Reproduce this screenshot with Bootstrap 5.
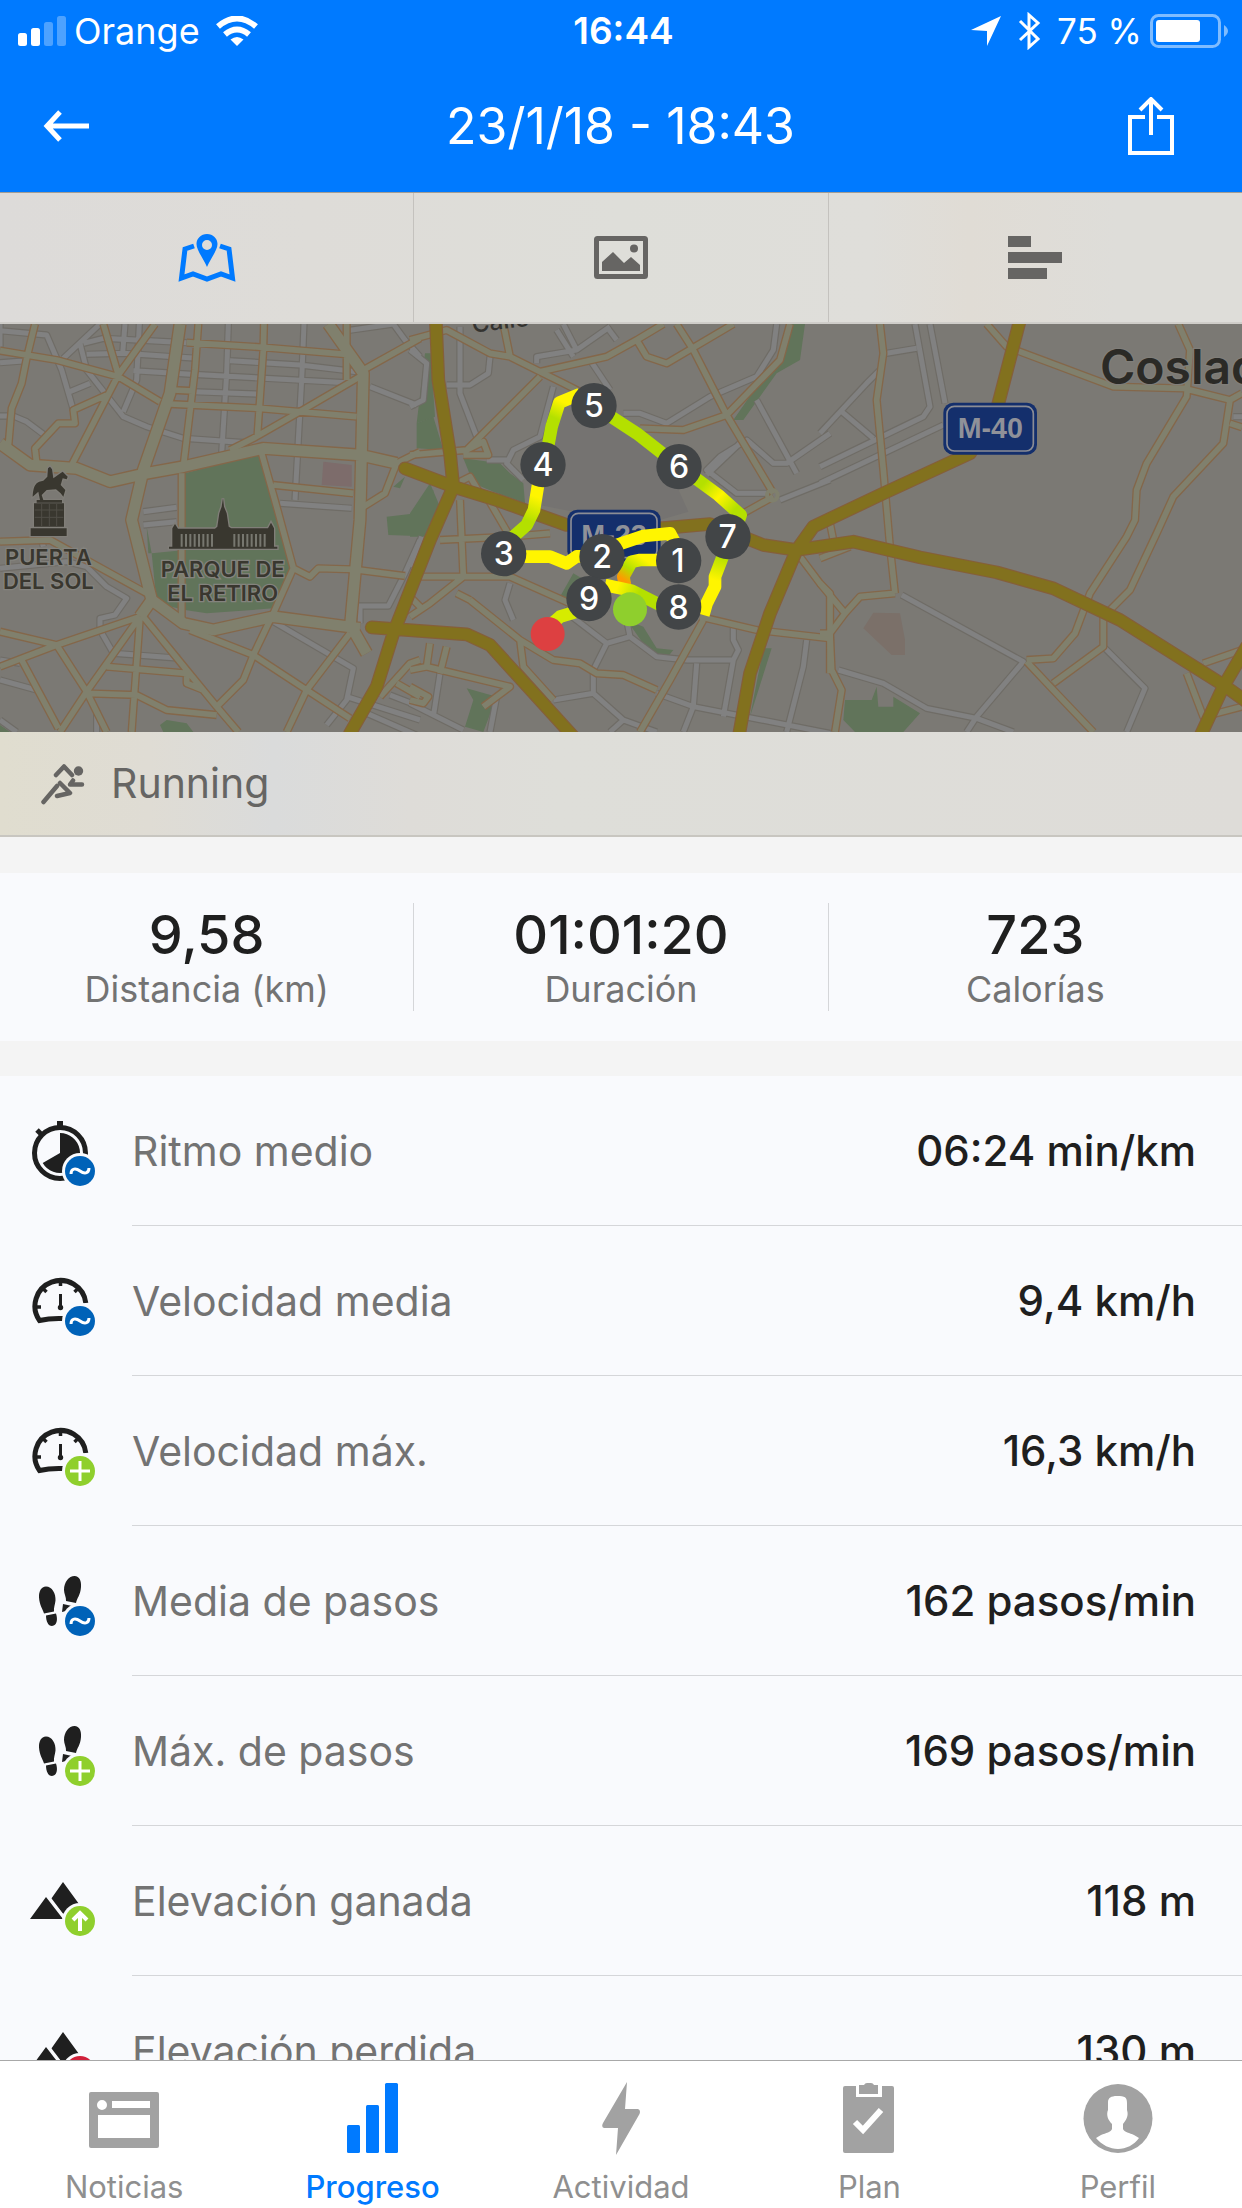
<!DOCTYPE html>
<html lang="es">
<head>
<meta charset="utf-8">
<meta name="viewport" content="width=device-width, initial-scale=1">
<title>23/1/18 - 18:43</title>
<link href="https://cdn.jsdelivr.net/npm/bootstrap@5.3.0/dist/css/bootstrap.min.css" rel="stylesheet">
<style>
body{font-family:Inter,"Liberation Sans",sans-serif;background:#f4f4f4;color:#1f1f1f}
svg{display:block}
a{color:inherit;text-decoration:none}
.topbar{background:#007aff;color:#fff}
.status-row{height:62px;font-size:36px;line-height:44px;padding:0 13px 0 18px}
.clock{font-size:37px}
.battery-level{font-size:35px}
.side{flex:1 1 0}
.title-row{height:130px;padding:0 68px 2px 43px}
.title-row h1{font-size:50px;line-height:60px;font-weight:400}
.icon-btn{height:64px;border:0;background:none;color:#fff;padding:0}
.view-tabs{height:132px;border-top:1px solid #a29d95;border-bottom:2px solid #cfcdc9;background:linear-gradient(90deg,#dddbd9,#dedcd8 25%,#deded9 50%,#dfdeda 70%,#e0dcd5 78%,#deddd9 90%)}
.view-tabs a{color:#666563}
.view-tabs a:not(:last-child){border-right:1px solid #c4c2be}
.view-tabs a.active{color:#007aff}
.route-map{width:100%;height:408px;background:#7b7974}
.sport{height:105px;border-bottom:2px solid #c8c6c0;background:linear-gradient(90deg,#e0ddcf,#dfdcd4 12%,#dadbdb 22%,#dedcd8 33%,#deded9 45%,#dedcd8);color:#666563;font-size:41px;padding-left:40px;gap:25px}
.totals{background:#f9fafd;margin:36px 0 35px;padding:30px 0;height:168px}
.totals .cell:not(:last-child){border-right:1px solid #d5d6d9}
.total-value{font-size:54px;line-height:64px;font-weight:500}
.total-label{font-size:36px;line-height:44px;color:#737373}
.metrics{background:#f9fafd}
.metric{height:150px;padding-left:30px;gap:36px}
.metric-body{border-bottom:1px solid #d5d6d9;padding-right:46px;font-size:41px;line-height:48px}
.metric-name{color:#737373}
.metric-value{font-weight:500;font-size:42px}
.bottom-tabs{height:148px;background:#fff;border-top:1px solid #a8a8a8;color:#8f8f8f;font-size:31px;line-height:36px}
.bottom-tabs a{padding-top:20px;gap:12px}
.bottom-tabs svg{fill:#a2a2a2}
.bottom-tabs a.active{color:#007aff;font-weight:500}
.bottom-tabs a.active svg{fill:#007aff}
.road-net{fill:none;stroke-linejoin:round}
</style>
</head>
<body>
<svg width="0" height="0" class="position-absolute" aria-hidden="true">
<defs>
<symbol id="badge-avg" viewBox="0 0 66 70"><circle cx="50" cy="55" r="18" fill="#f9fafd"/><circle cx="50" cy="55" r="15" fill="#0062b8"/><path d="M41 58c0-6 5-6 9-3s9 3 9-3" fill="none" stroke="#fff" stroke-width="3"/></symbol>
<symbol id="badge-plus" viewBox="0 0 66 70"><circle cx="50" cy="55" r="18" fill="#f9fafd"/><circle cx="50" cy="55" r="15" fill="#8fcf2d"/><path d="M40 55h20M50 45v20" fill="none" stroke="#fff" stroke-width="3"/></symbol>
<symbol id="badge-up" viewBox="0 0 66 70"><circle cx="50" cy="55" r="18" fill="#f9fafd"/><circle cx="50" cy="55" r="15" fill="#8fcf2d"/><path d="M50 65V47M43 54l7-7 7 7" fill="none" stroke="#fff" stroke-width="4"/></symbol>
<symbol id="badge-down" viewBox="0 0 66 70"><circle cx="50" cy="55" r="18" fill="#f9fafd"/><circle cx="50" cy="55" r="15" fill="#d0203a"/><path d="M50 45v18M43 56l7 7 7-7" fill="none" stroke="#fff" stroke-width="4"/></symbol>
<symbol id="gauge" viewBox="0 0 66 70"><path d="M33 52.500Q20 52 9.500 54.500A25.500 25.500 0 1 1 55.800 37" fill="none" stroke="#1f1f1f" stroke-width="5"/><path d="M30.500 14v6M6 41h5M13.500 23l3 3M47.500 23l-3 3" stroke="#1f1f1f" stroke-width="3.500"/><path d="M30.500 28v14" stroke="#1f1f1f" stroke-width="3"/><circle cx="30.500" cy="41.500" r="2.700"/></symbol>
<symbol id="steps" viewBox="0 0 66 70"><path d="M16 20.500c6 0 10 7 9.500 14-.3 4-2 7-1.500 11l-10 2c-1-4-4.500-8-5-16-.2-6 2-11 7-11zM16 49.500l10-2c2 6 1 12-4 12.500-4 0-6-5-6-10.500zM44.500 10c5 0 7 5 6.500 11-.5 8-4 11-5 16l-10-2c.4-4-2-7-2-11 0-8 5-14 10.500-14zM33 38l9 2-2 4-8 2z"/></symbol>
<symbol id="peaks" viewBox="0 0 66 70"><path d="M33 16l16 22-16 10L21 33zM16 31l17 22H0z"/></symbol>
</defs>
</svg>

<div class="d-flex flex-column vh-100 overflow-hidden">
<header class="topbar flex-shrink-0">
  <div class="status-row d-flex align-items-center">
    <div class="side d-flex align-items-center">
      <svg width="48" height="30" viewBox="0 0 48 30" fill="#fff"><rect y="17" width="9" height="13" rx="2.500"/><rect x="13" y="12" width="9" height="18" rx="2.500"/><g opacity=".3"><rect x="26" y="6" width="9" height="24" rx="2.500"/><rect x="39" width="9" height="30" rx="2.500"/></g></svg>
      <span class="px-2">Orange</span>
      <svg class="ms-2" width="42" height="30" viewBox="0 0 42 30" fill="none" stroke="#fff"><path d="M2 10.500Q21-5.500 40 10.500" stroke-width="6"/><path d="M9 18.500q12-10 24 0" stroke-width="6"/><path d="M14.500 23.500q6.500-5 13 0L21 30z" fill="#fff" stroke="none"/></svg>
    </div>
    <span class="clock fw-semibold">16:44</span>
    <div class="side d-flex align-items-center justify-content-end">
      <svg width="30" height="30" viewBox="0 0 30 30" fill="#fff"><path d="M30 0L16 30V15L0 14z"/></svg>
      <svg class="mx-3" width="24" height="38" viewBox="0 0 24 38" fill="none" stroke="#fff" stroke-width="3"><path d="M3 9l18 18-9 8V3l9 8L3 28"/></svg>
      <span class="battery-level me-2">75 %</span>
      <svg width="79" height="34" viewBox="0 0 79 34"><rect x="1.500" y="1.500" width="68" height="31" rx="7" fill="none" stroke="#7fbcff" stroke-width="3"/><rect x="6" y="6" width="44" height="22" rx="3" fill="#fff"/><path d="M74 11q8 6 0 12z" fill="#7fbcff"/></svg>
    </div>
  </div>
  <div class="title-row d-flex align-items-center">
    <div class="side d-flex"><button class="icon-btn" type="button" aria-label="Atrás"><svg width="46" height="32" viewBox="0 0 46 32" fill="none" stroke="#fff" stroke-width="5"><path d="M46 16H4M17 2L4 16l13 14"/></svg></button></div>
    <h1 class="m-0 ps-4">23/1/18 - 18:43</h1>
    <div class="side d-flex justify-content-end"><button class="icon-btn" type="button" aria-label="Compartir"><svg width="46" height="58" viewBox="0 0 46 58" fill="none" stroke="#fff" stroke-width="4"><path d="M17 20H2v36h42V20H29M23 38V3M12 13L23 2l11 11"/></svg></button></div>
  </div>
</header>

<main class="flex-grow-1 overflow-hidden">
  <nav class="view-tabs row g-0" aria-label="Vistas">
    <a class="col d-flex align-items-center justify-content-center active" href="#mapa" aria-label="Mapa"><svg width="58" height="48" viewBox="0 0 58 48" fill="currentColor"><path fill-rule="evenodd" d="M29 0c6 0 10.500 4.500 10.500 10 0 6-6.500 14-10.500 23-4-9-10.500-17-10.500-23C18.500 4.500 23 0 29 0zm0 6a5 5 0 1 0 0 10 5 5 0 0 0 0-10z"/><path d="M16 12L7 15 3.500 44 15 40l14 5 14-5 11.500 4L51 15l-9-3" fill="none" stroke="currentColor" stroke-width="5"/></svg></a>
    <a class="col d-flex align-items-center justify-content-center" href="#fotos" aria-label="Fotos"><svg width="54" height="43" viewBox="0 0 54 43" fill="currentColor"><rect x="2.500" y="2.500" width="49" height="38" rx="1" fill="none" stroke="currentColor" stroke-width="5"/><path d="M8 35V26l11-10 11 11 7-6 9 8v6z"/><circle cx="40" cy="12.500" r="4"/></svg></a>
    <a class="col d-flex align-items-center justify-content-center" href="#datos" aria-label="Datos"><svg width="54" height="43" viewBox="0 0 54 43" fill="currentColor"><path d="M0 0h23v11H0zM0 16h54v11H0zM0 32h39v11H0z"/></svg></a>
  </nav>

  <svg class="route-map" viewBox="0 12 3726 1224" preserveAspectRatio="xMidYMid slice" role="img" aria-label="Mapa del recorrido">
    <defs>
      <g id="minor">
        <path d="M0 32L140 45 185 150 220 270M0 128L80 122M300 12L190 115M240 70L260 150 370 290 440 320 550 355 740 368M250 70L310 55 560 68M260 103L370 100 590 115M375 12L368 100M418 12L410 180 370 275M400 152L560 162 1040 188M210 215L270 190M685 12L680 160 665 400M912 12L905 180 885 540M690 122L900 135 1070 155M580 215L770 222M840 550L1055 565M1110 200L1250 255M0 288H40L80 305 140 350M1040 32L1180 12 1215 60 1260 110M430 575L530 562M430 615L530 605M0 745L200 725 260 740 320 800 380 835 345 885 300 895V930L340 1000 540 1015M0 1020L60 1030M0 1080L110 1110M820 905L1060 1045 1040 1140 980 1215M1065 858H1165L1215 760 1260 660M1080 860V910M1040 1130L1260 1200M1170 1125L1260 1160M1100 1180L1260 1250M290 1170V1236M0 1200L50 1236M0 12V80M125 660L130 680"/>
        <path transform="translate(1230)" d="M0 90L50 130 40 240 0 260M150 20V220L200 350M240 110L235 160 180 195H110M430 200L390 350 310 390 290 430 340 480M230 420H290M380 130V110L500 90 460 12M500 90L600 20M440 30L490 110M590 20L620 60M540 120L600 210M1100 12L1090 90 1040 170 900 230 770 310 690 280H640M1260 340L1130 430H1090L1010 360 930 410 890 450 980 520H1070M1110 540L1260 480M1040 240L1160 460M1000 360L890 465M300 790L285 840 310 900M460 870L590 970 660 950 650 900M590 970L550 1050V1120L430 1140M550 1120L640 1200 740 1236M640 1200L600 1236M660 950L740 1010 830 1020H970L985 990 970 960V920M860 1030L850 1160M740 1120L850 1160 1260 1240M850 1160L820 1236M1190 960L1180 1040 1130 1236M970 1020L940 1190M90 1060L70 1190M0 1150L160 1230M260 1130L240 1236M35 650L0 740"/>
        <path transform="translate(2460)" d="M285 12L330 260 310 290 0 440M330 12L375 250M370 315L0 490M200 100L290 85M180 150L140 190 0 340M65 275L160 355M245 825L610 1025 470 1190 440 1236M55 1050L190 1090 320 1165 470 1195 580 1236M855 985L975 1105 920 1236M1240 290H1266"/>
      </g>
      <g id="street">
        <path d="M0 92L170 120 355 170 480 245M105 12L80 115 65 190 35 265 25 380M310 12L355 165M465 12L355 165 215 435M320 225L220 270 225 310H175L105 385 110 430M595 12L585 150 550 440M560 68L790 82 1040 103M792 12L790 90 772 350M520 210L580 213M510 252L780 265 1070 290M1080 170L900 275 760 355 690 390M1040 12V180M1260 55L1090 150M785 400L830 560 880 745 820 880 760 1005 730 1080 650 1160M820 495L1060 520M545 460V900M1075 570L1155 520 1190 430 1260 395M880 745L930 770 955 745 1060 748 1215 768M0 665L150 660 440 820M0 935L170 975 420 890M170 975L0 1040M420 890L260 1115 180 1236M170 975L260 1115 320 1236M65 1020L175 1225M420 890L395 1236M430 890L560 1050 650 1160 715 1236M320 1040L560 1060V1090L610 1110M260 1120L410 1125 500 1170 650 1185M570 930L760 1005 920 1110 1050 1195M1050 940L920 1110 860 1236M1140 1130L1230 1030 1260 1020M1190 1090L1260 1130"/>
        <path transform="translate(1230)" d="M0 60L110 30 240 100 300 110 390 155 460 190 510 215M280 12L300 110M390 155L590 110 680 60 760 12M680 60L710 110 770 130 970 12M800 12L850 90 950 285 1090 520M1140 12L1110 120 950 285 820 330 690 325M390 170L170 390 0 405M170 390L220 365 235 405H160M1000 580L1090 530M150 540L160 770M160 770H300L480 850M0 770H160L60 850 0 890M0 830L40 870M870 890L1040 930 1260 955M880 900L780 1080 690 1236M180 840L330 960 430 1020 510 1030 560 1060 640 1065 740 1110M140 820L180 840M330 960L340 1040 430 1140M60 970L50 1040 300 1100 220 1160M110 980L90 1060M0 1100L55 1130 40 1150 0 1140M1170 710L1230 790 1260 820V1060M90 660L300 650M230 530L300 650 420 640M120 500L180 470 210 520M0 1050L50 1040"/>
        <path transform="translate(2460)" d="M180 12L190 100 170 240 190 450 210 680 225 820M500 12L560 80 880 200 1090 205 1230 240 1266 220M1075 12L1110 90 1100 230 980 430 950 510 945 600 920 650 810 820 765 940 700 1015 620 1020M1230 240L1210 370 1060 530 1010 640 930 810 850 890V980L700 1090M620 1025L700 1110 820 1236M225 820L120 830 75 880 30 940H0M0 790L75 880M30 940L35 1050 65 1110 45 1236M1230 310L1266 322M30 610L40 660M0 715L90 680M1100 1060L1150 1190 1266 1160M1150 1030L1266 990"/>
      </g>
      <path id="avenue" d="M540 12L510 220 430 450 395 600 455 840M0 370L90 435 230 445 330 485 440 460 550 440 790 385 1080 405 1190 430M985 12L1090 160 1080 600 1050 930M455 840L550 910 640 930 820 890 1080 925M455 840L420 890M1060 930L1100 1000"/>
      <path id="motorway" d="M1215 445L1360 500 1490 540 1700 615 1980 625 2130 612 2290 675 2390 690 2560 665 2760 712 2990 757 3160 805 3360 900 3670 1095 3740 1145M1308 12L1315 180 1350 400 1360 500 1290 660 1235 800 1180 940 1130 1100 1050 1240M1115 922L1400 943 1470 975 1720 1250M3060 0L2990 270 2910 400 2650 520 2440 620 2390 690 2310 880 2250 1060 2218 1240M3740 980L3670 1100 3600 1250"/>
      <linearGradient id="g34" gradientUnits="userSpaceOnUse" x1="330" y1="640" x2="385" y2="500"><stop offset=".3" stop-color="#b4e000"/><stop offset=".8" stop-color="#fff500"/></linearGradient>
      <linearGradient id="g45" gradientUnits="userSpaceOnUse" x1="415" y1="370" x2="480" y2="230"><stop offset=".5" stop-color="#b4e000"/><stop offset=".85" stop-color="#fff500"/></linearGradient>
      <linearGradient id="g67" gradientUnits="userSpaceOnUse" x1="860" y1="475" x2="990" y2="590"><stop offset=".15" stop-color="#b4e000"/><stop offset=".5" stop-color="#fff500"/><stop offset=".85" stop-color="#b4e000"/></linearGradient>
      <linearGradient id="g78" gradientUnits="userSpaceOnUse" x1="940" y1="710" x2="915" y2="800"><stop stop-color="#b4e000"/><stop offset=".8" stop-color="#fff500"/></linearGradient>
      <linearGradient id="g89" gradientUnits="userSpaceOnUse" x1="740" y1="850" x2="600" y2="795"><stop offset=".4" stop-color="#b4e000"/><stop offset=".85" stop-color="#fff500"/></linearGradient>
      <linearGradient id="g01" gradientUnits="userSpaceOnUse" x1="645" y1="795" x2="700" y2="715"><stop offset=".1" stop-color="#ff9a00"/><stop offset=".5" stop-color="#b4e000"/><stop offset="1" stop-color="#fff500"/></linearGradient>
    </defs>
    <g fill="#61745a">
      <path d="M555 460L780 400 855 690 885 745 820 865 620 880 555 870 470 850 455 700 555 690zM440 620L455 700 445 700zM1160 590L1230 582 1300 510 1310 650 1165 645zM1180 500L1215 470 1200 505zM480 1215L500 1200 560 1210 580 1236H490zM1250 310L1300 290 1330 390 1250 385zM0 1215L30 1236H0z"/>
      <path transform="translate(1230)" d="M160 415L270 430 300 460 340 490 345 550 250 515 190 490zM45 100H62L75 290 20 310zM0 580L60 490 90 560 40 650H0zM1145 12H1185L1170 120 1100 160 1000 300H970L1060 170 1120 100zM1060 985H1085L1020 1190zM490 760L540 790 480 860 450 830zM650 900L700 920 740 985 790 990 770 1015 720 1000zM170 1105L260 1130 220 1236 165 1220 190 1140z"/>
      <path transform="translate(2460)" d="M75 1140H155L170 1100 175 1160H220V1130L300 1180 250 1236H105L70 1200z"/>
    </g>
    <path d="M1640 250L1800 260 2000 430 2065 575 1980 600 1800 590 1590 550 1640 400z" fill="#757371"/>
    <path d="M970 425L1055 435V500L965 495z" fill="#7d6c6b"/>
    <path d="M2620 878L2700 880 2715 960V1005H2675L2590 925z" fill="#7b7069"/>
    <g class="road-net">
      <use href="#minor" stroke="#6f6c66" stroke-width="22"/><use href="#minor" stroke="#818181" stroke-width="15"/>
      <use href="#street" stroke="#84674a" stroke-width="25"/><use href="#avenue" stroke="#84674a" stroke-width="40"/>
      <use href="#street" stroke="#80806d" stroke-width="17"/><use href="#avenue" stroke="#80806d" stroke-width="32"/>
      <use href="#motorway" stroke="#855f3a" stroke-width="41" stroke-linecap="round"/><use href="#motorway" stroke="#82711e" stroke-width="34" stroke-linecap="round"/>
      <circle cx="2317" cy="526" r="16" stroke="#80806d" stroke-width="12"/>
    </g>
    <g fill="#39372f" stroke="#807e78" stroke-width="8" paint-order="stroke">
      <path d="M92 625H200V648H92zM102 550H192V620H102zM110 540H186V548H110zM98 530C100 490 112 485 130 482L142 470 144 445 150 440 156 448 160 475 178 462 188 455 203 470 200 478 188 475 182 495 196 510 190 530 182 520 168 508 140 510 125 525 130 540H120L115 515z"/>
      <path d="M507 686H832V680H822V625L813 608 804 625H694L686 620 680 580 672 560 669 535 665 560 658 580 652 620 645 626H534L525 612 517 625V680H507z"/>
    </g>
    <path d="M545 642V680M558 642V680M571 642V680M584 642V680M597 642V680M610 642V680M623 642V680M636 642V680M703 642V680M716 642V680M729 642V680M742 642V680M755 642V680M768 642V680M781 642V680M794 642V680" stroke="#77776f" stroke-width="6"/>
    <path d="M104 570H190M104 592H190M125 552V618M148 552V618M170 552V618" stroke="#504e46" stroke-width="3"/>
    <g font-size="66" font-weight="600" text-anchor="middle" fill="#39372f" stroke="#84837e" stroke-width="8" paint-order="stroke">
      <text x="145" y="736">PUERTA</text><text x="145" y="807">DEL SOL</text>
      <text x="668" y="771">PARQUE DE</text><text x="668" y="842">EL RETIRO</text>
    </g>
    <text x="3300" y="192" font-size="144" font-weight="600" fill="#2b2a26" stroke="#807e79" stroke-width="8" paint-order="stroke">Coslada</text>
    <text transform="translate(1418 38) rotate(-7)" font-size="72" font-weight="500" fill="#343330">Calle</text>
    <g font-family="Liberation Sans, sans-serif" font-size="86" font-weight="700" text-anchor="middle" fill="#8f9199">
      <rect x="1702" y="569" width="280" height="155" rx="30" fill="#142f6c"/><rect x="1713" y="580" width="258" height="133" rx="22" fill="none" stroke="#8b8d95" stroke-width="5"/><text x="1842" y="675">M-23</text>
      <rect x="2830" y="248" width="281" height="156" rx="30" fill="#142f6c"/><rect x="2841" y="259" width="259" height="134" rx="22" fill="none" stroke="#8b8d95" stroke-width="5"/><text x="2971" y="355">M-40</text>
    </g>
    <g transform="translate(1230)">
      <g class="road-net" stroke-width="38" stroke="#fff500">
        <path d="M645 795L640 770 665 725 690 720H760" stroke="url(#g01)"/>
        <path d="M806 690L780 640 700 648 620 675 576 709H500L470 730 420 710H300"/>
        <path d="M310 650L350 615 372 570 385 490" stroke="url(#g34)"/>
        <path d="M412 390L425 320 448 248 510 222" stroke="url(#g45)"/>
        <path d="M600 288L680 340 770 410" stroke="#b4e000"/>
        <path d="M850 470L925 525 992 585 980 620" stroke="url(#g67)"/>
        <path d="M942 700L915 770V800L890 850 880 885" stroke="url(#g78)"/>
        <path d="M760 860L665 812 585 795" stroke="url(#g89)"/>
        <path d="M500 875L450 890 410 925" stroke="#d6ec00"/>
      </g>
      <g fill="#424547"><circle cx="552" cy="257" r="68"/><circle cx="399" cy="434" r="68"/><circle cx="807" cy="440" r="68"/><circle cx="281" cy="701" r="68"/><circle cx="576" cy="710" r="68"/><circle cx="806" cy="722" r="68"/><circle cx="954" cy="650" r="68"/><circle cx="806" cy="861" r="68"/><circle cx="537" cy="836" r="68"/></g>
      <circle cx="660" cy="868" r="51" fill="#8fcf2d"/><circle cx="413" cy="942" r="51" fill="#dd4041"/>
      <g fill="#fff" font-size="96" font-weight="500" text-anchor="middle"><text x="552" y="292">5</text><text x="399" y="469">4</text><text x="807" y="475">6</text><text x="281" y="736">3</text><text x="576" y="745">2</text><text x="804" y="757">1</text><text x="953" y="685">7</text><text x="806" y="896">8</text><text x="537" y="871">9</text></g>
    </g>
  </svg>

  <div class="sport d-flex align-items-center">
    <svg width="46" height="42" viewBox="0 0 46 42" fill="none" stroke="#666563" stroke-width="4.500" stroke-linecap="round" stroke-linejoin="round"><circle cx="38.500" cy="8" r="4.700" fill="#666563" stroke="none"/><path d="M16 12l8-8.500L32 12M42 21.500H30l3-4M20 20l10 10-13 3M17 23L3.500 39"/></svg>
    <span>Running</span>
  </div>

  <section class="totals row g-0 text-center">
    <div class="col cell"><div class="total-value">9,58</div><div class="total-label">Distancia (km)</div></div>
    <div class="col cell"><div class="total-value">01:01:20</div><div class="total-label">Duración</div></div>
    <div class="col cell"><div class="total-value">723</div><div class="total-label">Calorías</div></div>
  </section>

  <ul class="metrics list-unstyled m-0">
    <li class="metric d-flex align-items-center">
      <svg width="66" height="70" fill="#1f1f1f"><circle cx="30" cy="37" r="25.500" fill="none" stroke="#1f1f1f" stroke-width="5"/><path d="M27 5h6v6h-6zM30 37V17a20 20 0 1 1-17.300 30z"/><path d="M7 14l5 5" stroke="#1f1f1f" stroke-width="5"/><use href="#badge-avg"/></svg>
      <div class="metric-body d-flex flex-grow-1 h-100 align-items-center justify-content-between"><span class="metric-name">Ritmo medio</span><span class="metric-value">06:24 min/km</span></div>
    </li>
    <li class="metric d-flex align-items-center">
      <svg width="66" height="70" fill="#1f1f1f"><use href="#gauge"/><use href="#badge-avg"/></svg>
      <div class="metric-body d-flex flex-grow-1 h-100 align-items-center justify-content-between"><span class="metric-name">Velocidad media</span><span class="metric-value">9,4 km/h</span></div>
    </li>
    <li class="metric d-flex align-items-center">
      <svg width="66" height="70" fill="#1f1f1f"><use href="#gauge"/><use href="#badge-plus"/></svg>
      <div class="metric-body d-flex flex-grow-1 h-100 align-items-center justify-content-between"><span class="metric-name">Velocidad máx.</span><span class="metric-value">16,3 km/h</span></div>
    </li>
    <li class="metric d-flex align-items-center">
      <svg width="66" height="70" fill="#1f1f1f"><use href="#steps"/><use href="#badge-avg"/></svg>
      <div class="metric-body d-flex flex-grow-1 h-100 align-items-center justify-content-between"><span class="metric-name">Media de pasos</span><span class="metric-value">162 pasos/min</span></div>
    </li>
    <li class="metric d-flex align-items-center">
      <svg width="66" height="70" fill="#1f1f1f"><use href="#steps"/><use href="#badge-plus"/></svg>
      <div class="metric-body d-flex flex-grow-1 h-100 align-items-center justify-content-between"><span class="metric-name">Máx. de pasos</span><span class="metric-value">169 pasos/min</span></div>
    </li>
    <li class="metric d-flex align-items-center">
      <svg width="66" height="70" fill="#1f1f1f"><use href="#peaks"/><path d="M17 28l18 24" stroke="#f9fafd" stroke-width="2"/><use href="#badge-up"/></svg>
      <div class="metric-body d-flex flex-grow-1 h-100 align-items-center justify-content-between"><span class="metric-name">Elevación ganada</span><span class="metric-value">118 m</span></div>
    </li>
    <li class="metric d-flex align-items-center">
      <svg width="66" height="70" fill="#1f1f1f"><use href="#peaks"/><path d="M17 28l18 24" stroke="#f9fafd" stroke-width="2"/><use href="#badge-down"/></svg>
      <div class="metric-body d-flex flex-grow-1 h-100 align-items-center justify-content-between"><span class="metric-name">Elevación perdida</span><span class="metric-value">130 m</span></div>
    </li>
  </ul>
</main>

<nav class="bottom-tabs row g-0 flex-shrink-0" aria-label="Principal">
  <a class="col d-flex flex-column align-items-center" href="#noticias"><svg width="70" height="76" viewBox="0 0 70 76"><path fill-rule="evenodd" d="M2 11h66q2 0 2 2v52q0 2-2 2H2q-2 0-2-2V13q0-2 2-2zm7 23v23h52V34zm14-14v7h38v-7zm-10-1a5 5 0 1 0 0 10 5 5 0 0 0 0-10z"/></svg><span>Noticias</span></a>
  <a class="col d-flex flex-column align-items-center active" href="#progreso" aria-current="page"><svg width="52" height="76" viewBox="0 0 52 76"><rect y="44" width="13" height="28" rx="1.500"/><rect x="19" y="24" width="13" height="48" rx="1.500"/><rect x="38" y="2" width="13" height="70" rx="1.500"/></svg><span>Progreso</span></a>
  <a class="col d-flex flex-column align-items-center" href="#actividad"><svg width="38" height="76" viewBox="0 0 38 76"><path d="M25 1l-2 27h13q3 1 1.500 5L14 74l2-27H2q-3-1-1-5z"/></svg><span>Actividad</span></a>
  <a class="col d-flex flex-column align-items-center" href="#plan"><svg width="52" height="76" viewBox="0 0 52 76"><path d="M2 5h11v11h26V5h10q2 0 2 2v63q0 2-2 2H2q-2 0-2-2V7q0-2 2-2z"/><path d="M16 13V4h5q1-2 3-2h4q2 0 3 2h4v9z"/><path d="M12 41l8 8 18-20" fill="none" stroke="#fff" stroke-width="6"/></svg><span>Plan</span></a>
  <a class="col d-flex flex-column align-items-center" href="#perfil"><svg width="70" height="76" viewBox="0 0 70 76"><circle cx="35" cy="37.500" r="34.500"/><path d="M34 15c8 0 10 1 10 7v7c2 6-1 10-4 14v5c1 3 7 4 11 6l5 3c-5 7-13 11-21 11s-16-4-22-11l5-3c5-2 10-3 11-6v-5c-4-4-6-9-4-14v-8c0-4 3-6 9-6z" fill="#fff"/></svg><span>Perfil</span></a>
</nav>
</div>
<script src="https://cdn.jsdelivr.net/npm/bootstrap@5.3.0/dist/js/bootstrap.bundle.min.js"></script>
</body>
</html>
